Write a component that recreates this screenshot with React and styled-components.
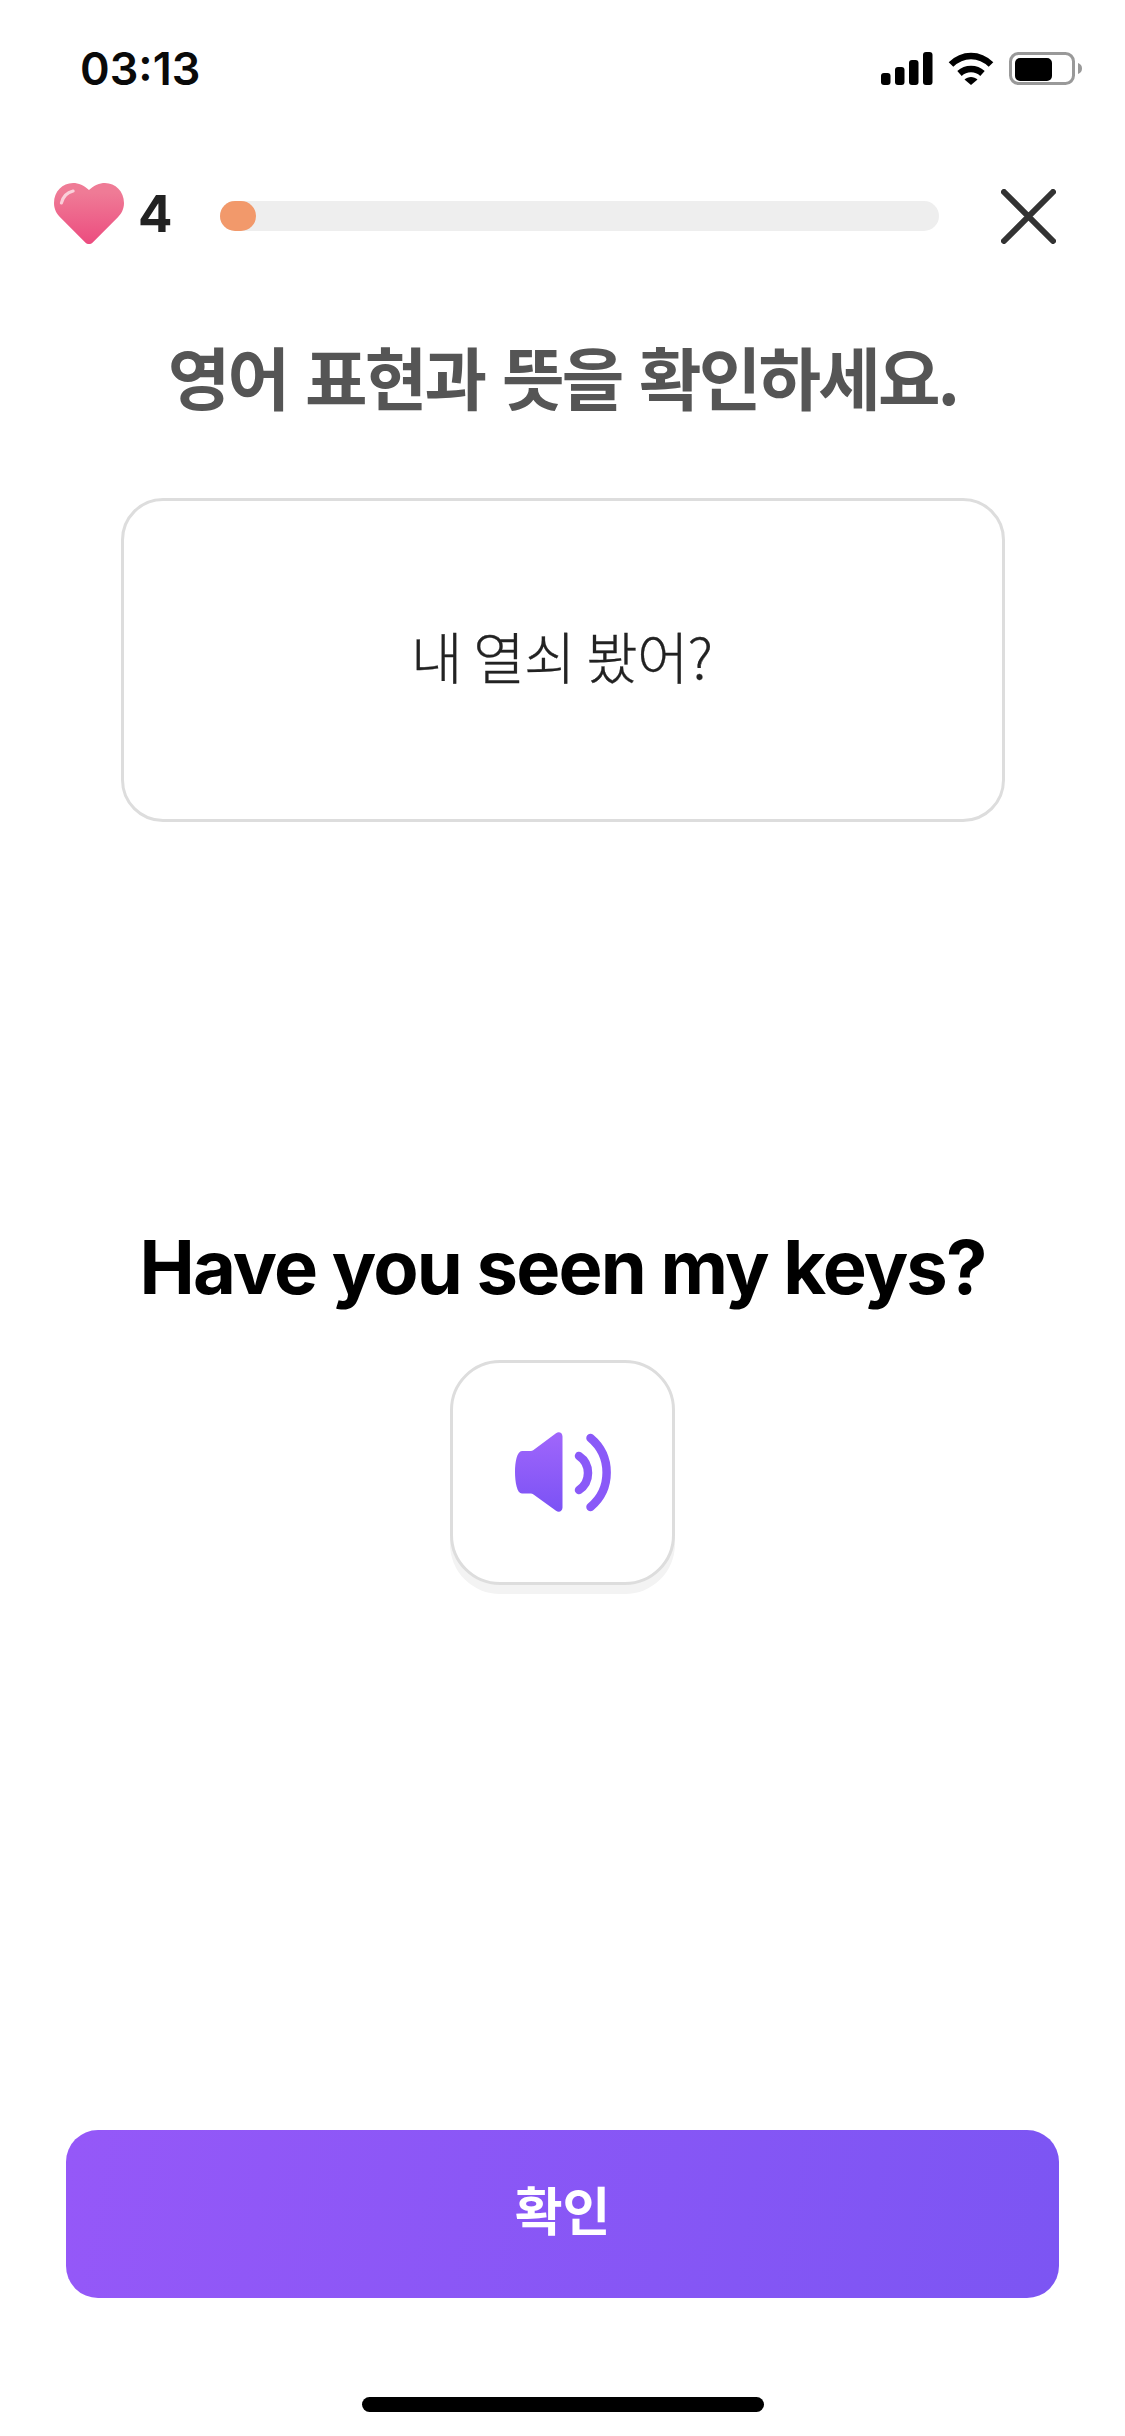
import { Component } from 'react';
import styled, { createGlobalStyle } from 'styled-components'

const GlobalStyle = createGlobalStyle`
  html, body { margin: 0; padding: 0; background: #fff; }
  * { box-sizing: border-box; }
`
const Page = styled.div`
  width: 1125px;
  height: 2436px;
  display: flex;
  flex-direction: column;
  overflow: hidden;
  background: #fff;
  font-family: Inter, "Noto Sans CJK KR", sans-serif;
`
const StatusBar = styled.div`
  display: flex;
  justify-content: space-between;
  align-items: center;
  height: 33px;
  margin-top: 52px;
  padding: 0 43px 0 80px;
`
const Time = styled.div`
  font-size: 45px;
  font-weight: 600;
  color: #0a0a0a;
`
const StatusIcons = styled.div`
  display: flex;
  align-items: center;
  gap: 15px;
`
const Header = styled.div`
  display: flex;
  align-items: center;
  height: 66px;
  margin-top: 98px;
  padding: 0 69px 0 54px;
`
const Hearts = styled.div`
  display: flex;
  align-self: flex-start;
  gap: 14px;
  width: 166px;
`
const HeartCount = styled.div`
  font-size: 51px;
  font-weight: 700;
  line-height: 61px;
  color: #222;
`
const Track = styled.div`
  width: 719px;
  height: 30px;
  border-radius: 15px;
  background: #eee;
`
const Fill = styled.div`
  height: 30px;
  border-radius: 15px;
  background: #f2996b;
`
const Close = styled.div`
  display: flex;
  margin-left: auto;
`
const Title = styled.h1`
  margin: 77px 0 0;
  font-family: "Noto Sans CJK KR", sans-serif;
  font-size: 68px;
  line-height: 100px;
  font-weight: 700;
  letter-spacing: -2.8px;
  word-spacing: 5px;
  text-align: center;
  color: #555;
`
const MeaningCard = styled.div`
  display: flex;
  align-items: center;
  justify-content: center;
  width: 884px;
  height: 324px;
  margin: 72px 0 0 121px;
  padding: 0 3px 12px 0;
  border: 3px solid #ddd;
  border-radius: 42px;
  font-family: "Noto Sans CJK KR", sans-serif;
  font-size: 56px;
  font-weight: 300;
  letter-spacing: -0.8px;
  -webkit-text-stroke: 0.3px #222;
  color: #222;
`
const Sentence = styled.div`
  margin-top: 400px;
  font-size: 74px;
  line-height: 90px;
  font-weight: 700;
  letter-spacing: -1.85px;
  text-align: center;
  color: #000;
`
const SoundButton = styled.div`
  display: flex;
  align-items: center;
  justify-content: center;
  width: 225px;
  height: 225px;
  margin: 48px auto 0;
  border: 3px solid #ddd;
  border-radius: 50px;
  background: #fff;
  box-shadow: 0 9px 0 #f3f3f3;
`
const Footer = styled.div`
  display: flex;
  flex-direction: column;
  align-items: center;
  margin-top: auto;
  padding-bottom: 24px;
`
const ConfirmButton = styled.div`
  display: flex;
  align-items: center;
  justify-content: center;
  width: 993px;
  height: 168px;
  padding-bottom: 12px;
  border-radius: 32px;
  background: linear-gradient(100deg, #9558f8 0%, #7c55f3 100%);
  font-family: "Noto Sans CJK KR", sans-serif;
  font-size: 52px;
  font-weight: 700;
  color: #fff;
`
const HomeBar = styled.div`
  width: 402px;
  height: 15px;
  margin-top: 99px;
  border-radius: 8px;
  background: #000;
`

const SignalIcon = () => (
  <svg width="52" height="33" viewBox="0 0 52 33">
    <rect x="0" y="21" width="9.5" height="12" rx="3" fill="#000" />
    <rect x="14" y="15" width="9.5" height="18" rx="3" fill="#000" />
    <rect x="28" y="8" width="9.5" height="25" rx="3" fill="#000" />
    <rect x="42" y="0" width="9.5" height="33" rx="3" fill="#000" />
  </svg>
)
const WifiIcon = () => (
  <svg width="46" height="33" viewBox="0 0 46 33">
    <path d="M3 12.5C14.5 1 31.5 1 43 12.5" fill="none" stroke="#000" strokeWidth="6.5" strokeLinejoin="round" />
    <path d="M11.5 21.5C18 15.5 28 15.5 34.5 21.5" fill="none" stroke="#000" strokeWidth="6.5" />
    <path d="M16.5 27.5C20 24 26 24 29.5 27.5L23 33Z" fill="#000" />
  </svg>
)
const BatteryIcon = () => (
  <svg width="73" height="33" viewBox="0 0 73 33">
    <rect x="1.5" y="1.5" width="63" height="30" rx="8" fill="none" stroke="#999" strokeWidth="3" />
    <rect x="6" y="6" width="37" height="23" rx="5" fill="#000" />
    <path d="M69 11C72 12 73 14 73 16.5C73 19 72 21 69 22Z" fill="#999" />
  </svg>
)
const HeartIcon = () => (
  <svg width="70" height="61" viewBox="0 0 66 61" preserveAspectRatio="none">
    <defs>
      <linearGradient id="heartFill" x1="0" y1="0" x2="0" y2="1">
        <stop offset="0.15" stopColor="#ef7b96" />
        <stop offset="1" stopColor="#ec4c7f" />
      </linearGradient>
    </defs>
    <path d="M33 7C28.5 2.5 23 0 18 0C8 0 0 8.5 0 20C0 26 2.5 31 6 34.5L29.5 59.5C31.5 61.5 34.5 61.5 36.5 59.5L60 34.5C63.5 31 66 26 66 20C66 8.5 58 0 48 0C43 0 37.5 2.5 33 7Z" fill="url(#heartFill)" />
    <path d="M18 8C12 9.5 8.5 13.5 7 20" fill="none" stroke="#fff" strokeOpacity="0.65" strokeWidth="3" strokeLinecap="round" />
  </svg>
)
const CloseIcon = () => (
  <svg width="55" height="55" viewBox="0 0 55 55">
    <path d="M3 3L52 52M52 3L3 52" fill="none" stroke="#333" strokeWidth="6" strokeLinecap="round" />
  </svg>
)
const SpeakerIcon = () => (
  <svg width="97" height="81" viewBox="0 0 97 81">
    <defs>
      <linearGradient id="speakerFill" x1="0" y1="0" x2="0" y2="1">
        <stop offset="0" stopColor="#a066fb" />
        <stop offset="1" stopColor="#7b52f5" />
      </linearGradient>
    </defs>
    <path d="M8 19H16C17.5 19 18.5 18.6 19.5 18L42 1.2C45 -0.8 48.5 0.8 48.5 4.5V75.5C48.5 79.2 45 80.8 42 78.8L19.5 62.6C18.5 62 17.5 61.6 16 61.6H8C3 61.6 1 50 1 40C1 30 3 19 8 19Z" fill="url(#speakerFill)" />
    <path d="M65 24C77 32 77 50 65 58" fill="none" stroke="#8a59f8" strokeWidth="8.5" strokeLinecap="round" />
    <path d="M76.5 6C98 24 98 57 76.5 75" fill="none" stroke="#8a59f8" strokeWidth="8.5" strokeLinecap="round" />
  </svg>
)

class App extends Component {
  state = { hearts: 4, progress: 36 }
  render () {
  return (
    <Page>
      <GlobalStyle />
      <StatusBar>
        <Time>03:13</Time>
        <StatusIcons>
          <SignalIcon />
          <WifiIcon />
          <BatteryIcon />
        </StatusIcons>
      </StatusBar>
      <Header>
        <Hearts>
          <HeartIcon />
          <HeartCount>{this.state.hearts}</HeartCount>
        </Hearts>
        <Track>
          <Fill style={{ width: this.state.progress }} />
        </Track>
        <Close><CloseIcon /></Close>
      </Header>
      <Title>영어 표현과 뜻을 확인하세요.</Title>
      <MeaningCard>내 열쇠 봤어?</MeaningCard>
      <Sentence>Have you seen my keys?</Sentence>
      <SoundButton><SpeakerIcon /></SoundButton>
      <Footer>
        <ConfirmButton>확인</ConfirmButton>
        <HomeBar />
      </Footer>
    </Page>
  );
}
}
export default App;
